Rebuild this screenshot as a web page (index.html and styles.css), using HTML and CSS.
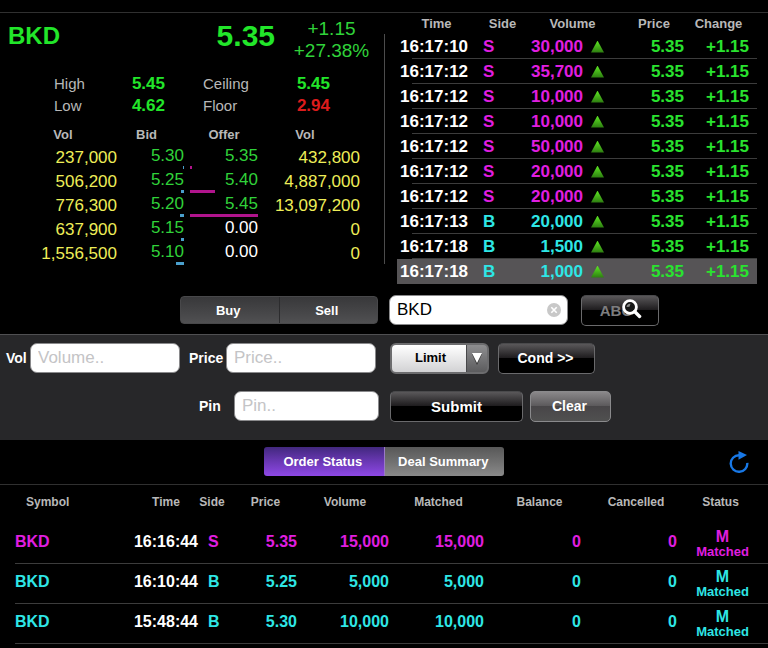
FILE: index.html
```html
<!DOCTYPE html>
<html lang="en">
  <head>
    <meta charset="UTF-8" />
    <meta name="viewport" content="width=device-width, initial-scale=1.0" />
    <title>BKD</title>

    <link rel="stylesheet" href="styles.css">
  </head>

  <body>
    <header class="topbar"></header>

    <main>
      <section class="market">
        <div class="quote">
          <div class="quote-head">
            <h1>BKD</h1>
            <p class="last">5.35</p>
            <p class="diff">+1.15<br>+27.38%</p>
          </div>

          <dl class="range">
            <dt>High</dt>
            <dd>5.45</dd>
            <dt>Ceiling</dt>
            <dd>5.45</dd>
            <dt>Low</dt>
            <dd>4.62</dd>
            <dt>Floor</dt>
            <dd class="red">2.94</dd>
          </dl>

          <table class="depth">
            <colgroup>
              <col class="d-vol"><col class="d-bid"><col class="d-gap"><col class="d-offer"><col class="d-vol2">
            </colgroup>
            <thead>
              <tr><th>Vol</th><th>Bid</th><th></th><th>Offer</th><th>Vol</th></tr>
            </thead>
            <tbody>
              <tr>
                <td>237,000</td>
                <td class="bid">5.30<span class="bar" style="width: 1.8%"></span></td>
                <td></td>
                <td class="offer">5.35<span class="bar" style="width: 3.3%"></span></td>
                <td>432,800</td>
              </tr>
              <tr>
                <td>506,200</td>
                <td class="bid">5.25<span class="bar" style="width: 3.9%"></span></td>
                <td></td>
                <td class="offer">5.40<span class="bar" style="width: 37.3%"></span></td>
                <td>4,887,000</td>
              </tr>
              <tr>
                <td>776,300</td>
                <td class="bid">5.20<span class="bar" style="width: 5.9%"></span></td>
                <td></td>
                <td class="offer">5.45<span class="bar" style="width: 100%"></span></td>
                <td>13,097,200</td>
              </tr>
              <tr>
                <td>637,900</td>
                <td class="bid">5.15<span class="bar" style="width: 4.9%"></span></td>
                <td></td>
                <td class="offer none">0.00<span class="bar" style="width: 0%"></span></td>
                <td>0</td>
              </tr>
              <tr>
                <td>1,556,500</td>
                <td class="bid">5.10<span class="bar" style="width: 11.9%"></span></td>
                <td></td>
                <td class="offer none">0.00<span class="bar" style="width: 0%"></span></td>
                <td>0</td>
              </tr>
            </tbody>
          </table>
        </div>

        <div class="divider"></div>

        <div class="ticker">
          <table class="trades">
            <colgroup>
              <col class="t-time"><col class="t-side"><col class="t-vol"><col class="t-arrow"><col class="t-price"><col class="t-change">
            </colgroup>
            <thead>
              <tr><th>Time</th><th>Side</th><th colspan="2">Volume</th><th>Price</th><th>Change</th></tr>
            </thead>
            <tbody>
              <tr class="sell"><td>16:17:10</td><td>S</td><td>30,000</td><td><i class="up"></i></td><td>5.35</td><td>+1.15</td></tr>
              <tr class="sell"><td>16:17:12</td><td>S</td><td>35,700</td><td><i class="up"></i></td><td>5.35</td><td>+1.15</td></tr>
              <tr class="sell"><td>16:17:12</td><td>S</td><td>10,000</td><td><i class="up"></i></td><td>5.35</td><td>+1.15</td></tr>
              <tr class="sell"><td>16:17:12</td><td>S</td><td>10,000</td><td><i class="up"></i></td><td>5.35</td><td>+1.15</td></tr>
              <tr class="sell"><td>16:17:12</td><td>S</td><td>50,000</td><td><i class="up"></i></td><td>5.35</td><td>+1.15</td></tr>
              <tr class="sell"><td>16:17:12</td><td>S</td><td>20,000</td><td><i class="up"></i></td><td>5.35</td><td>+1.15</td></tr>
              <tr class="sell"><td>16:17:12</td><td>S</td><td>20,000</td><td><i class="up"></i></td><td>5.35</td><td>+1.15</td></tr>
              <tr class="buy"><td>16:17:13</td><td>B</td><td>20,000</td><td><i class="up"></i></td><td>5.35</td><td>+1.15</td></tr>
              <tr class="buy"><td>16:17:18</td><td>B</td><td>1,500</td><td><i class="up"></i></td><td>5.35</td><td>+1.15</td></tr>
              <tr class="buy latest"><td>16:17:18</td><td>B</td><td>1,000</td><td><i class="up"></i></td><td>5.35</td><td>+1.15</td></tr>
            </tbody>
          </table>
        </div>
      </section>

      <form class="order">
        <div class="search-row">
          <div class="segment">
            <button type="button">Buy</button>
            <button type="button">Sell</button>
          </div>
          <div class="search">
            <input type="text" class="field" value="BKD" aria-label="Symbol">
            <button type="button" class="clear-text" aria-label="Clear symbol">
              <svg width="14" height="14" viewBox="0 0 14 14">
                <circle cx="7" cy="7" r="7" fill="#c8c8c8" />
                <path d="M4.3 4.3l5.4 5.4M9.7 4.3l-5.4 5.4" stroke="#fff" stroke-width="1.6" />
              </svg>
            </button>
          </div>
          <button type="button" class="btn lookup">
            ABC
            <svg width="20" height="20" viewBox="0 0 20 20">
              <circle cx="8" cy="8" r="6.4" fill="#161616" stroke="#fff" stroke-width="2.8" />
              <path d="M4.5 8a3.5 3.5 0 0 1 4-3.2l-1 3z" fill="#8a8a8a" />
              <path d="M12.6 12.6l5 4.8" stroke="#fff" stroke-width="3.4" stroke-linecap="round" />
            </svg>
          </button>
        </div>

        <div class="panel">
          <div class="row">
            <label for="vol">Vol</label>
            <input type="text" class="field" id="vol" placeholder="Volume..">
            <label for="price" class="price-label">Price</label>
            <input type="text" class="field" id="price" placeholder="Price..">
            <div class="select">
              <select aria-label="Price type">
                <option>Limit</option>
              </select>
              <svg width="10" height="13" viewBox="0 0 10 13">
                <path d="M0 2h10l-5 11z" fill="#333" />
                <path d="M0 1h10l-5 10z" fill="#fff" />
              </svg>
            </div>
            <button type="button" class="btn cond">Cond &gt;&gt;</button>
          </div>
          <div class="row pin-row">
            <label for="pin">Pin</label>
            <input type="password" class="field" id="pin" placeholder="Pin..">
            <button type="button" class="btn submit">Submit</button>
            <button type="reset" class="btn grey">Clear</button>
          </div>
        </div>
      </form>

      <section class="status">
        <nav>
          <div class="tabs">
            <button class="active">Order Status</button>
            <button>Deal Summary</button>
          </div>
          <button class="refresh" aria-label="Refresh">
            <svg width="20" height="22" viewBox="0 0 20 22">
              <path d="M10 4.2a8.3 8.3 0 1 0 8.3 7.6" fill="none" stroke="#1878e6" stroke-width="2.4" />
              <path d="M9.5 0l8.5 4-8.5 4.8z" fill="#1878e6" />
            </svg>
          </button>
        </nav>

        <table class="orders">
          <colgroup>
            <col class="o-symbol"><col class="o-time"><col class="o-side"><col class="o-price"><col class="o-vol"><col class="o-matched"><col class="o-balance"><col class="o-cancel"><col class="o-status">
          </colgroup>
          <thead>
            <tr>
              <th>Symbol</th><th>Time</th><th>Side</th><th>Price</th><th>Volume</th><th>Matched</th><th class="wide">Balance</th><th class="wide">Cancelled</th><th>Status</th>
            </tr>
          </thead>
          <tbody>
            <tr class="sell">
              <td>BKD</td><td>16:16:44</td><td>S</td><td>5.35</td><td>15,000</td><td>15,000</td><td>0</td><td>0</td>
              <td>M<small>Matched</small></td>
            </tr>
            <tr class="buy">
              <td>BKD</td><td>16:10:44</td><td>B</td><td>5.25</td><td>5,000</td><td>5,000</td><td>0</td><td>0</td>
              <td>M<small>Matched</small></td>
            </tr>
            <tr class="buy">
              <td>BKD</td><td>15:48:44</td><td>B</td><td>5.30</td><td>10,000</td><td>10,000</td><td>0</td><td>0</td>
              <td>M<small>Matched</small></td>
            </tr>
          </tbody>
        </table>
      </section>
    </main>
  </body>
</html>
```
FILE: styles.css
```css
* {
  box-sizing: border-box;
}
body {
  margin: 0;
  background-color: #000;
  color: #fff;
  font-family: "Liberation Sans", Arial, sans-serif;
}
h1,
p,
dl,
dd {
  margin: 0;
}
button,
input,
select {
  font-family: inherit;
  margin: 0;
}
button {
  color: #fff;
  font-weight: bold;
  font-size: 13px;
  padding: 0;
  border: none;
  background: none;
}
svg {
  display: block;
}
table {
  border-collapse: collapse;
  table-layout: fixed;
  width: 100%;
}
th,
td {
  padding: 0;
  text-align: right;
}
th {
  color: #b8b8b8;
  font-size: 13px;
  text-align: center;
}
.topbar {
  height: 13px;
  border-bottom: 1px solid #303030;
}

/* quote */
.market {
  display: grid;
  grid-template-columns: 50% 1px 1fr;
  height: 272px;
}
.divider {
  background-color: #4c4c4c;
  margin: 21px 0;
}
.quote {
  padding: 5px 24px 0 0;
}
.quote-head {
  display: flex;
  height: 44px;
  margin-right: -24px;
  padding-left: 8px;
  color: #22e62a;
}
h1 {
  flex: 1;
  font-size: 24px;
  line-height: 36px;
}
.last {
  font-size: 30px;
  line-height: 36px;
  font-weight: bold;
}
.diff {
  width: 109px;
  padding-left: 4px;
  text-align: center;
  font-size: 19px;
  line-height: 22px;
  color: #30d23a;
}
.range {
  display: grid;
  grid-template-columns: 64px 47px 1fr 62px;
  margin-top: 11px;
  padding: 0 30px 0 54px;
  line-height: 22px;
}
.range dt {
  color: #b8b8b8;
  font-size: 15px;
}
.range dt:nth-of-type(even) {
  padding-left: 38px;
}
.range dd {
  color: #22e62a;
  font-size: 17px;
  font-weight: bold;
  text-align: right;
}
.range .red {
  color: #dc1c1c;
}

/* bid and offer */
.depth {
  margin-top: 7px;
}
.d-vol {
  width: 117px;
}
.d-bid {
  width: 67px;
}
.d-gap {
  width: 6px;
}
.d-offer {
  width: 68px;
}
.d-vol2 {
  width: 102px;
}
.depth th {
  height: 22px;
  padding-bottom: 1px;
}
.depth th:first-child {
  padding-left: 9px;
}
.depth th:nth-child(2),
.depth th:last-child {
  padding-right: 8px;
}
.depth td {
  height: 24px;
  font-size: 17px;
  line-height: 20px;
  color: #eeee58;
}
.depth .bid,
.depth .offer {
  color: #30d23a;
  vertical-align: top;
}
.depth .none {
  color: #fff;
}
.bar {
  display: block;
  height: 3px;
  min-width: 1px;
  margin-left: auto;
  background-color: #4a9fcc;
}
.offer .bar {
  min-width: 0;
  margin-left: 0;
  background-color: #b0148c;
}

/* trades */
.ticker {
  padding: 0 11px 0 12px;
}
.t-time {
  width: 83px;
}
.t-side {
  width: 45px;
}
.t-vol {
  width: 58px;
}
.t-arrow {
  width: 37px;
}
.t-price {
  width: 64px;
}
.t-change {
  width: 73px;
}
.trades th {
  height: 21px;
}
.trades th:first-child,
.trades th:last-child {
  padding-right: 4px;
}
.trades th:nth-child(4) {
  padding-left: 4px;
}
.trades tbody tr {
  background: linear-gradient(#3c3c3c, #3c3c3c) right bottom / calc(100% - 15px) 1px no-repeat;
}
.trades tbody .latest {
  background: #565456;
}
.trades td {
  height: 25px;
  font-size: 17px;
  font-weight: bold;
  line-height: 24px;
  color: #29e32f;
}
.trades td:first-child {
  padding-left: 3px;
  text-align: left;
  color: #fff;
}
.trades td:nth-child(2) {
  padding-left: 3px;
  text-align: left;
}
.trades td:last-child {
  padding-right: 8px;
}
.trades .sell td:nth-child(2),
.trades .sell td:nth-child(3) {
  color: #e01ee0;
}
.trades .buy td:nth-child(2),
.trades .buy td:nth-child(3) {
  color: #2ee6e6;
}
.up {
  display: block;
  width: 13px;
  height: 12px;
  margin-left: 8px;
  background: linear-gradient(#5ce622, #2c7a10);
  clip-path: polygon(50% 0, 100% 100%, 0 100%);
}

/* order form */
.search-row {
  display: flex;
  align-items: center;
  height: 49px;
  padding: 1px 0 0 180px;
}
.segment {
  display: flex;
  width: 198px;
  height: 28px;
  margin-right: 11px;
  border-radius: 4px;
  background: linear-gradient(#38383a, #505052);
  border: 1px solid #48484a;
}
.segment button {
  flex: 1;
  padding-right: 3px;
}
.segment button + button {
  border-left: 1px solid #2c2c2e;
}
.field {
  width: 150px;
  height: 30px;
  padding: 0 7px;
  border: 1px solid #8a8a8c;
  border-radius: 7px;
  background-color: #fff;
  color: #000;
  font-size: 17px;
}
.field::placeholder {
  color: #c4c4c6;
}
.search {
  position: relative;
  margin-right: 13px;
}
.search .field {
  width: 179px;
  display: block;
}
.clear-text {
  position: absolute;
  right: 7px;
  top: 8px;
}
.btn {
  height: 31px;
  padding-bottom: 2px;
  border: 1px solid #6a6a6c;
  border-top-color: #4a4a4c;
  border-radius: 5px;
  background: linear-gradient(#5a585a, #1e1c1e 48%, #000 50%);
  font-size: 14px;
}
.lookup {
  position: relative;
  width: 78px;
  padding: 0 8px 0 0;
  font-size: 15px;
  color: #7c7c7e;
}
.lookup svg {
  position: absolute;
  left: 40px;
  top: 3px;
}
.panel {
  display: grid;
  gap: 17px;
  padding: 8px 0 18px 6px;
  height: 106px;
  border-top: 1px solid #505052;
  background-color: #272729;
}
.row {
  display: flex;
  align-items: flex-start;
}
.row label {
  width: 24px;
  font-size: 14px;
  font-weight: bold;
  line-height: 30px;
}
.row .price-label {
  width: 37px;
  margin-left: 9px;
}
.select {
  position: relative;
  margin: 0 9px 0 14px;
}
.select select {
  display: block;
  appearance: none;
  width: 99px;
  height: 31px;
  padding: 0 22px 2px 4px;
  border: 2px solid #6c6c6e;
  border-radius: 6px;
  background: linear-gradient(90deg, transparent 74px, #48484a 74px, #48484a 75px, transparent 75px),
    linear-gradient(#8e8e90, #5c5c5e) right / 20px 100% no-repeat,
    linear-gradient(#fff, #d2d2d4);
  color: #000;
  font-size: 13px;
  font-weight: bold;
  text-align-last: center;
}
.select svg {
  position: absolute;
  right: 7px;
  top: 9px;
  pointer-events: none;
}
.cond {
  width: 97px;
  padding-right: 2px;
}
.pin-row {
  padding-left: 193px;
}
.pin-row label {
  width: 35px;
}
.pin-row .field {
  width: 145px;
}
.submit {
  width: 133px;
  margin: 0 7px 0 11px;
  padding-bottom: 0;
  font-size: 15px;
}
.grey {
  width: 81px;
  padding-right: 2px;
  border-color: #8a8a8c;
  background: linear-gradient(#8a888a, #5c5a5c 48%, #484648 50%, #505050);
}

/* order status */
.status nav {
  display: grid;
  grid-template-columns: 1fr auto 1fr;
  align-items: center;
  height: 45px;
  padding-bottom: 1px;
  border-bottom: 1px solid #303030;
}
.tabs {
  grid-column: 2;
  display: flex;
  width: 240px;
  height: 29px;
  border-radius: 3px;
  overflow: hidden;
}
.tabs button {
  flex: 1;
  padding-right: 2px;
  background: linear-gradient(#585858, #707070 50%, #8a8a8a);
}
.tabs .active {
  background: linear-gradient(#42287e, #6a38b4 50%, #8e48e6);
  border-right: 1px solid #9a78c8;
}
.refresh {
  justify-self: end;
  margin-right: 19px;
}
.orders {
  width: calc(100% - 15px);
  margin-left: 15px;
}
.o-symbol {
  width: 115px;
}
.o-time {
  width: 68px;
}
.o-side {
  width: 32px;
}
.o-price {
  width: 67px;
}
.o-vol {
  width: 92px;
}
.o-matched {
  width: 95px;
}
.o-balance {
  width: 97px;
}
.o-cancel {
  width: 96px;
}
.o-status {
  width: 91px;
}
.orders th {
  height: 39px;
  padding: 0 0 5px 4px;
  font-size: 12px;
}
.orders th:first-child {
  padding-left: 11px;
  text-align: left;
}
.orders th:nth-child(3),
.orders th:last-child {
  padding-left: 0;
  padding-right: 4px;
}
.orders .wide {
  padding-left: 14px;
}
.orders tbody tr {
  background: linear-gradient(#3c3c3c, #3c3c3c) bottom / 100% 1px no-repeat;
}
.orders .sell {
  color: #e01ee0;
}
.orders .buy {
  color: #2ee6e6;
}
.orders td {
  height: 40px;
  padding-bottom: 5px;
  font-size: 16px;
  line-height: 16px;
  font-weight: bold;
}
.orders td:first-child {
  text-align: left;
}
.orders td:nth-child(2) {
  color: #fff;
}
.orders td:nth-child(3) {
  padding-left: 10px;
  text-align: left;
}
.orders td:last-child {
  text-align: center;
  padding-bottom: 1px;
}
.orders small {
  display: block;
  font-size: 13px;
  line-height: 14px;
}
```
